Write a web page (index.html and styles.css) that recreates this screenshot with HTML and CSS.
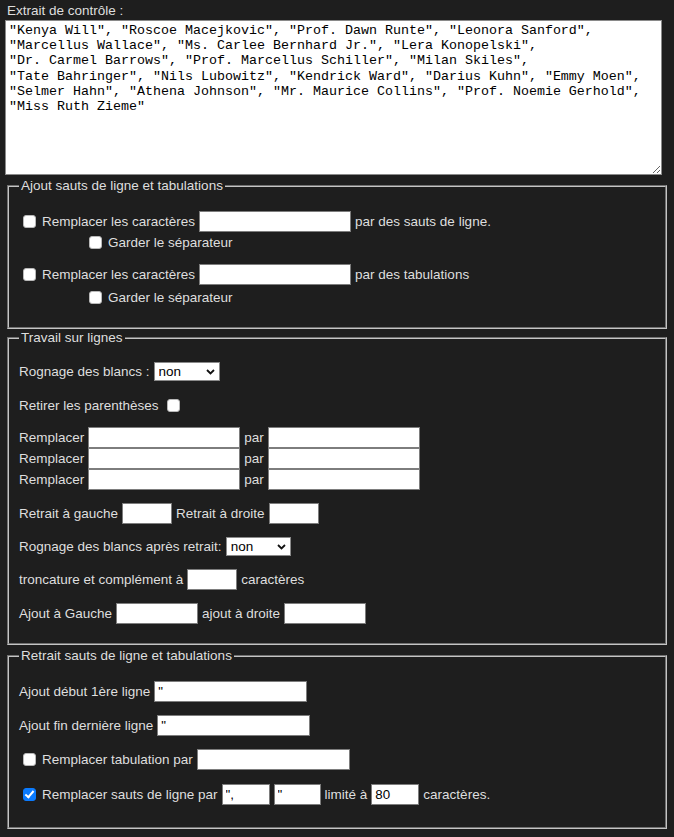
FILE: index.html
```html
<!DOCTYPE html>
<html lang="fr">
<head>
<meta charset="utf-8">
<title>Extrait de contrôle</title>
<link rel="stylesheet" href="styles.css">
</head>
<body>
<div class="page">
  <label class="top-label" for="out">Extrait de contrôle :</label>
  <textarea id="out" class="output">
"Kenya Will", "Roscoe Macejkovic", "Prof. Dawn Runte", "Leonora Sanford",
"Marcellus Wallace", "Ms. Carlee Bernhard Jr.", "Lera Konopelski",
"Dr. Carmel Barrows", "Prof. Marcellus Schiller", "Milan Skiles",
"Tate Bahringer", "Nils Lubowitz", "Kendrick Ward", "Darius Kuhn", "Emmy Moen",
"Selmer Hahn", "Athena Johnson", "Mr. Maurice Collins", "Prof. Noemie Gerhold",
"Miss Ruth Zieme"</textarea>

  <fieldset class="box box-1">
    <legend>Ajout sauts de ligne et tabulations</legend>
    <div class="rows">
      <div class="row r-a"><input type="checkbox" class="cb"><span>Remplacer les caractères</span><input type="text" class="txt w152"><span>par des sauts de ligne.</span></div>
      <div class="row indent r-b"><input type="checkbox" class="cb"><span>Garder le séparateur</span></div>
      <div class="row r-c"><input type="checkbox" class="cb"><span>Remplacer les caractères</span><input type="text" class="txt w152"><span>par des tabulations</span></div>
      <div class="row indent r-d"><input type="checkbox" class="cb"><span>Garder le séparateur</span></div>
    </div>
  </fieldset>

  <fieldset class="box box-2">
    <legend>Travail sur lignes</legend>
    <div class="rows">
      <div class="row r-1"><span>Rognage des blancs :</span><span class="sel"><select class="select w66"><option>non</option></select><svg class="chev" width="9" height="6" viewBox="0 0 9 6"><path d="M1 1 L4.5 4.5 L8 1" fill="none" stroke="#111" stroke-width="1.8"/></svg></span></div>
      <div class="row r-2"><span>Retirer les parenthèses</span><input type="checkbox" class="cb cb-after"></div>
      <div class="group r-3">
        <div class="row"><span>Remplacer</span><input type="text" class="txt w152"><span>par</span><input type="text" class="txt w152"></div>
        <div class="row"><span>Remplacer</span><input type="text" class="txt w152"><span>par</span><input type="text" class="txt w152"></div>
        <div class="row"><span>Remplacer</span><input type="text" class="txt w152"><span>par</span><input type="text" class="txt w152"></div>
      </div>
      <div class="row r-4"><span>Retrait à gauche</span><input type="text" class="txt w50"><span>Retrait à droite</span><input type="text" class="txt w50"></div>
      <div class="row r-5"><span>Rognage des blancs après retrait:</span><span class="sel"><select class="select w65"><option>non</option></select><svg class="chev" width="9" height="6" viewBox="0 0 9 6"><path d="M1 1 L4.5 4.5 L8 1" fill="none" stroke="#111" stroke-width="1.8"/></svg></span></div>
      <div class="row r-6"><span>troncature et complément à</span><input type="text" class="txt w50"><span>caractères</span></div>
      <div class="row r-7"><span>Ajout à Gauche</span><input type="text" class="txt w82"><span>ajout à droite</span><input type="text" class="txt w82"></div>
    </div>
  </fieldset>

  <fieldset class="box box-3">
    <legend>Retrait sauts de ligne et tabulations</legend>
    <div class="rows">
      <div class="row s-1"><span>Ajout début 1ère ligne</span><input type="text" class="txt w153" value="&quot;"></div>
      <div class="row s-2"><span>Ajout fin dernière ligne</span><input type="text" class="txt w153" value="&quot;"></div>
      <div class="row s-3"><input type="checkbox" class="cb"><span>Remplacer tabulation par</span><input type="text" class="txt w153"></div>
      <div class="row s-4"><input type="checkbox" class="cb" checked><span>Remplacer sauts de ligne par</span><input type="text" class="txt w48" value="&quot;,"><input type="text" class="txt w47" value="&quot;"><span>limité à</span><input type="text" class="txt w48" value="80"><span>caractères.</span></div>
    </div>
  </fieldset>
</div>
</body>
</html>
```

FILE: styles.css
```css
html, body {
  margin: 0;
  padding: 0;
  background: #1e1e1e;
}

body {
  color: #dedede;
  font-family: "Liberation Sans", Arial, sans-serif;
  font-size: 13.5px;
}

.page {
  padding: 3px 5px 0 5px;
}

.top-label {
  display: block;
  line-height: 16px;
  height: 17px;
  padding-left: 2px;
}

.output {
  display: block;
  box-sizing: border-box;
  width: 657px;
  height: 155px;
  margin: 0;
  padding: 2px 3px;
  border: 1px solid #8a8a8a;
  background: #fff;
  color: #000;
  font-family: "Liberation Mono", "Courier New", monospace;
  font-size: 13.33px;
  line-height: 15.2px;
  resize: both;
  color-scheme: light;
}

.box {
  margin: 3px 2px 0 2px;
  padding: 0 10px;
  border: 2px groove #c4c4c4;
  min-width: 0;
}

.box legend {
  padding: 0 2px;
  line-height: 15px;
  font-size: 13.5px;
  color: #dedede;
}

.box-2 { margin-top: 1px; }
.box-3 { margin-top: 3px; }

.rows {
  display: flex;
  flex-direction: column;
}

.box-1 .rows { padding: 18px 0 19px; }
.box-2 .rows { padding: 16px 0 19px; }
.box-3 .rows { padding: 18px 0 22px; }

.row {
  display: flex;
  align-items: center;
  gap: 4px;
  height: 21px;
  white-space: nowrap;
}

.group {
  display: flex;
  flex-direction: column;
}

.indent { padding-left: 66px; }

.r-c { margin-top: 11px; }
.r-d { margin-top: 2px; }

.r-2 { margin-top: 13px; }
.r-3 { margin-top: 11px; }
.r-4 { margin-top: 13px; }
.r-5 { margin-top: 12px; }
.r-6 { margin-top: 12px; }
.r-7 { margin-top: 13px; }

.s-2 { margin-top: 13px; }
.s-3 { margin-top: 13px; }
.s-4 { margin-top: 14px; }

.cb {
  appearance: none;
  -webkit-appearance: none;
  box-sizing: border-box;
  width: 13px;
  height: 13px;
  margin: 0 2px 0 4px;
  border: 1px solid #b8b8b8;
  border-radius: 3px;
  background: #fff;
  flex: none;
}

.cb-after { margin: 0 0 0 4px; }

.cb:checked {
  background: #0b7bfe;
  border-color: #0b7bfe;
}

.cb:checked::after {
  content: "";
  display: block;
  box-sizing: border-box;
  width: 5px;
  height: 9px;
  margin: 0 0 0 3px;
  border-right: 2px solid #fff;
  border-bottom: 2px solid #fff;
  transform: rotate(40deg);
}

.txt {
  box-sizing: border-box;
  height: 21px;
  margin: 0;
  padding: 1px 3px;
  border: 1px solid #7d7d7d;
  background: #fff;
  color: #000;
  font-family: "Liberation Sans", Arial, sans-serif;
  font-size: 13.33px;
  flex: none;
  color-scheme: light;
}

.w152 { width: 152px; }
.w153 { width: 153px; }
.w50 { width: 50px; }
.w82 { width: 82px; }
.w48 { width: 48px; }
.w47 { width: 47px; }

.sel {
  position: relative;
  display: inline-flex;
  flex: none;
}

.select {
  appearance: none;
  -webkit-appearance: none;
  box-sizing: border-box;
  height: 19px;
  margin: 0;
  padding: 0 0 0 4px;
  border: 1px solid #8a8a8a;
  border-radius: 0;
  background: #fff;
  color: #000;
  font-family: "Liberation Sans", Arial, sans-serif;
  font-size: 13.5px;
  line-height: 17px;
  color-scheme: light;
}

.w66 { width: 66px; }
.w65 { width: 65px; }

.chev {
  position: absolute;
  right: 5px;
  top: 7px;
  pointer-events: none;
}
```
